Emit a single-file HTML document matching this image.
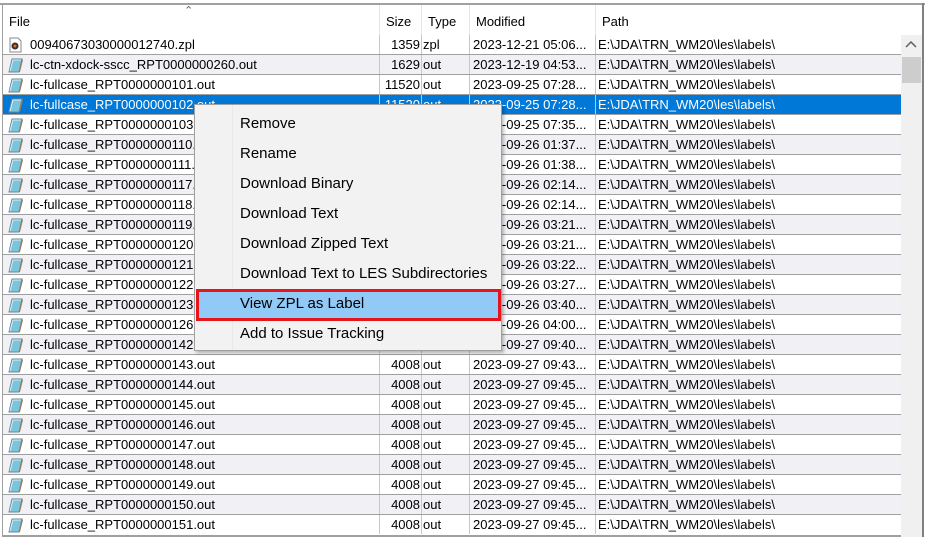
<!DOCTYPE html>
<html style="width:925px;height:537px;overflow:hidden"><head><meta charset="utf-8"><style>
*{margin:0;padding:0;box-sizing:border-box}
body{width:925px;height:537px;background:#fff;overflow:hidden;position:relative;font-family:"Liberation Sans",sans-serif;font-size:13px;color:#000}
.top{position:absolute;left:0;top:3px;width:925px;height:2px;background:#a0a0a0}
.lb{position:absolute;left:2px;top:3px;width:1px;height:534px;background:#a0a0a0}
.rb{position:absolute;left:922px;top:3px;width:2px;height:534px;background:#808080}
.hdr{position:absolute;top:5px;height:30px;left:3px;width:898px;background:#fff}
.hc{position:absolute;top:5px;height:30px;line-height:30px;padding-left:6px;border-right:1px solid #e5e5e5;padding-top:2px}
.row{position:absolute;left:3px;width:898px;height:20px;border-bottom:1px solid #a0a0a0}
.row.alt{background:#f0f0f5}
.row.sel{background:#0078d7;color:#fff}
.c{position:absolute;top:0;height:19px;line-height:19px;white-space:nowrap;overflow:hidden;border-right:1px solid #c8c8c8}
.f{left:0;width:377px;padding-left:27px}
.s{left:377px;width:42px;text-align:right;padding-right:1px}
.t{left:419px;width:48px;padding-left:1px}
.m{left:467px;width:126px;padding-left:3px}
.p{left:593px;width:305px;padding-left:2px;border-right:none}
.ic{position:absolute;left:3px;top:2px}
.sb{position:absolute;left:901px;top:35px;width:21px;height:502px;background:#f0f0f0}
.thumb{position:absolute;left:902px;top:57px;width:19px;height:26px;background:#cdcdcd}
.menu{position:absolute;left:194px;top:104px;width:308px;height:247px;background:#f2f2f2;border:1px solid #a0a0a0;box-shadow:2px 2px 3px rgba(0,0,0,.25);font-size:15px}
.gut{position:absolute;left:0;top:0;width:38px;height:100%;border-right:1px solid #e8e8e8}
.mi{position:absolute;left:45px;height:30px;line-height:30px}
.hl{position:absolute;left:1px;top:184px;width:305px;height:32px;background:#91c9f7;border:3px solid #e8141c}
</style></head><body>
<div class="top"></div>
<div class="hdr"></div>
<div class="hc" style="left:3px;width:377px">File</div>
<div style="position:absolute;left:184px;top:4px;font-size:11px;color:#666">&#8963;</div>
<div class="hc" style="left:380px;width:42px">Size</div>
<div class="hc" style="left:422px;width:48px">Type</div>
<div class="hc" style="left:470px;width:126px">Modified</div>
<div class="hc" style="left:596px;width:305px;border-right:none">Path</div>
<svg width="0" height="0" style="position:absolute"><defs>
<symbol id="doc" viewBox="0 0 18 16"><path d="M3 15 L6 2 L16 2 L13 15 Z" fill="#7cc4dc" stroke="#6a8a96"/><path d="M4 14 L7 3 L15 3" fill="none" stroke="#d8f0f8"/><path d="M13 15 L16 2 L17 3 L14 15Z" fill="#a07a50"/></symbol>
<symbol id="zpl" viewBox="0 0 18 16"><path d="M4 1 L12 1 L15 4 L15 15 L4 15 Z" fill="#fff" stroke="#888"/><circle cx="9" cy="9" r="3.5" fill="#333"/><circle cx="9" cy="9" r="1.5" fill="#e07020"/></symbol>
</defs></svg>
<div class="row" style="top:35px"><svg class="ic" width="18" height="16"><use href="#zpl"/></svg><div class="c f">00940673030000012740.zpl</div><div class="c s">1359</div><div class="c t">zpl</div><div class="c m">2023-12-21 05:06...</div><div class="c p">E:\JDA\TRN_WM20\les\labels\</div></div>
<div class="row alt" style="top:55px"><svg class="ic" width="18" height="16"><use href="#doc"/></svg><div class="c f">lc-ctn-xdock-sscc_RPT0000000260.out</div><div class="c s">1629</div><div class="c t">out</div><div class="c m">2023-12-19 04:53...</div><div class="c p">E:\JDA\TRN_WM20\les\labels\</div></div>
<div class="row" style="top:75px"><svg class="ic" width="18" height="16"><use href="#doc"/></svg><div class="c f">lc-fullcase_RPT0000000101.out</div><div class="c s">11520</div><div class="c t">out</div><div class="c m">2023-09-25 07:28...</div><div class="c p">E:\JDA\TRN_WM20\les\labels\</div></div>
<div class="row sel" style="top:95px"><svg class="ic" width="18" height="16"><use href="#doc"/></svg><div class="c f">lc-fullcase_RPT0000000102.out</div><div class="c s">11520</div><div class="c t">out</div><div class="c m">2023-09-25 07:28...</div><div class="c p">E:\JDA\TRN_WM20\les\labels\</div></div>
<div class="row" style="top:115px"><svg class="ic" width="18" height="16"><use href="#doc"/></svg><div class="c f">lc-fullcase_RPT0000000103.out</div><div class="c s">4008</div><div class="c t">out</div><div class="c m">2023-09-25 07:35...</div><div class="c p">E:\JDA\TRN_WM20\les\labels\</div></div>
<div class="row alt" style="top:135px"><svg class="ic" width="18" height="16"><use href="#doc"/></svg><div class="c f">lc-fullcase_RPT0000000110.out</div><div class="c s">4008</div><div class="c t">out</div><div class="c m">2023-09-26 01:37...</div><div class="c p">E:\JDA\TRN_WM20\les\labels\</div></div>
<div class="row" style="top:155px"><svg class="ic" width="18" height="16"><use href="#doc"/></svg><div class="c f">lc-fullcase_RPT0000000111.out</div><div class="c s">4008</div><div class="c t">out</div><div class="c m">2023-09-26 01:38...</div><div class="c p">E:\JDA\TRN_WM20\les\labels\</div></div>
<div class="row alt" style="top:175px"><svg class="ic" width="18" height="16"><use href="#doc"/></svg><div class="c f">lc-fullcase_RPT0000000117.out</div><div class="c s">4008</div><div class="c t">out</div><div class="c m">2023-09-26 02:14...</div><div class="c p">E:\JDA\TRN_WM20\les\labels\</div></div>
<div class="row" style="top:195px"><svg class="ic" width="18" height="16"><use href="#doc"/></svg><div class="c f">lc-fullcase_RPT0000000118.out</div><div class="c s">4008</div><div class="c t">out</div><div class="c m">2023-09-26 02:14...</div><div class="c p">E:\JDA\TRN_WM20\les\labels\</div></div>
<div class="row alt" style="top:215px"><svg class="ic" width="18" height="16"><use href="#doc"/></svg><div class="c f">lc-fullcase_RPT0000000119.out</div><div class="c s">4008</div><div class="c t">out</div><div class="c m">2023-09-26 03:21...</div><div class="c p">E:\JDA\TRN_WM20\les\labels\</div></div>
<div class="row" style="top:235px"><svg class="ic" width="18" height="16"><use href="#doc"/></svg><div class="c f">lc-fullcase_RPT0000000120.out</div><div class="c s">4008</div><div class="c t">out</div><div class="c m">2023-09-26 03:21...</div><div class="c p">E:\JDA\TRN_WM20\les\labels\</div></div>
<div class="row alt" style="top:255px"><svg class="ic" width="18" height="16"><use href="#doc"/></svg><div class="c f">lc-fullcase_RPT0000000121.out</div><div class="c s">4008</div><div class="c t">out</div><div class="c m">2023-09-26 03:22...</div><div class="c p">E:\JDA\TRN_WM20\les\labels\</div></div>
<div class="row" style="top:275px"><svg class="ic" width="18" height="16"><use href="#doc"/></svg><div class="c f">lc-fullcase_RPT0000000122.out</div><div class="c s">4008</div><div class="c t">out</div><div class="c m">2023-09-26 03:27...</div><div class="c p">E:\JDA\TRN_WM20\les\labels\</div></div>
<div class="row alt" style="top:295px"><svg class="ic" width="18" height="16"><use href="#doc"/></svg><div class="c f">lc-fullcase_RPT0000000123.out</div><div class="c s">4008</div><div class="c t">out</div><div class="c m">2023-09-26 03:40...</div><div class="c p">E:\JDA\TRN_WM20\les\labels\</div></div>
<div class="row" style="top:315px"><svg class="ic" width="18" height="16"><use href="#doc"/></svg><div class="c f">lc-fullcase_RPT0000000126.out</div><div class="c s">4008</div><div class="c t">out</div><div class="c m">2023-09-26 04:00...</div><div class="c p">E:\JDA\TRN_WM20\les\labels\</div></div>
<div class="row alt" style="top:335px"><svg class="ic" width="18" height="16"><use href="#doc"/></svg><div class="c f">lc-fullcase_RPT0000000142.out</div><div class="c s">4008</div><div class="c t">out</div><div class="c m">2023-09-27 09:40...</div><div class="c p">E:\JDA\TRN_WM20\les\labels\</div></div>
<div class="row" style="top:355px"><svg class="ic" width="18" height="16"><use href="#doc"/></svg><div class="c f">lc-fullcase_RPT0000000143.out</div><div class="c s">4008</div><div class="c t">out</div><div class="c m">2023-09-27 09:43...</div><div class="c p">E:\JDA\TRN_WM20\les\labels\</div></div>
<div class="row alt" style="top:375px"><svg class="ic" width="18" height="16"><use href="#doc"/></svg><div class="c f">lc-fullcase_RPT0000000144.out</div><div class="c s">4008</div><div class="c t">out</div><div class="c m">2023-09-27 09:45...</div><div class="c p">E:\JDA\TRN_WM20\les\labels\</div></div>
<div class="row" style="top:395px"><svg class="ic" width="18" height="16"><use href="#doc"/></svg><div class="c f">lc-fullcase_RPT0000000145.out</div><div class="c s">4008</div><div class="c t">out</div><div class="c m">2023-09-27 09:45...</div><div class="c p">E:\JDA\TRN_WM20\les\labels\</div></div>
<div class="row alt" style="top:415px"><svg class="ic" width="18" height="16"><use href="#doc"/></svg><div class="c f">lc-fullcase_RPT0000000146.out</div><div class="c s">4008</div><div class="c t">out</div><div class="c m">2023-09-27 09:45...</div><div class="c p">E:\JDA\TRN_WM20\les\labels\</div></div>
<div class="row" style="top:435px"><svg class="ic" width="18" height="16"><use href="#doc"/></svg><div class="c f">lc-fullcase_RPT0000000147.out</div><div class="c s">4008</div><div class="c t">out</div><div class="c m">2023-09-27 09:45...</div><div class="c p">E:\JDA\TRN_WM20\les\labels\</div></div>
<div class="row alt" style="top:455px"><svg class="ic" width="18" height="16"><use href="#doc"/></svg><div class="c f">lc-fullcase_RPT0000000148.out</div><div class="c s">4008</div><div class="c t">out</div><div class="c m">2023-09-27 09:45...</div><div class="c p">E:\JDA\TRN_WM20\les\labels\</div></div>
<div class="row" style="top:475px"><svg class="ic" width="18" height="16"><use href="#doc"/></svg><div class="c f">lc-fullcase_RPT0000000149.out</div><div class="c s">4008</div><div class="c t">out</div><div class="c m">2023-09-27 09:45...</div><div class="c p">E:\JDA\TRN_WM20\les\labels\</div></div>
<div class="row alt" style="top:495px"><svg class="ic" width="18" height="16"><use href="#doc"/></svg><div class="c f">lc-fullcase_RPT0000000150.out</div><div class="c s">4008</div><div class="c t">out</div><div class="c m">2023-09-27 09:45...</div><div class="c p">E:\JDA\TRN_WM20\les\labels\</div></div>
<div class="row" style="top:515px;height:22px;border-bottom:none"><svg class="ic" width="18" height="16"><use href="#doc"/></svg><div class="c f">lc-fullcase_RPT0000000151.out</div><div class="c s">4008</div><div class="c t">out</div><div class="c m">2023-09-27 09:45...</div><div class="c p">E:\JDA\TRN_WM20\les\labels\</div><div style="position:absolute;left:0;top:20px;width:898px;height:2px;background:#a0a0a0"></div></div>
<div class="lb"></div>
<div class="sb"></div>
<svg style="position:absolute;left:905px;top:41px" width="12" height="8"><path d="M1 6 L6 1 L11 6" fill="none" stroke="#606060" stroke-width="1.5"/></svg>
<div class="thumb"></div>
<div class="rb"></div>
<div class="menu">
<div class="gut"></div>
<div class="mi" style="top:4px">Remove</div>
<div class="mi" style="top:34px">Rename</div>
<div class="mi" style="top:64px">Download Binary</div>
<div class="mi" style="top:94px">Download Text</div>
<div class="mi" style="top:124px">Download Zipped Text</div>
<div class="mi" style="top:154px">Download Text to LES Subdirectories</div>
<div class="hl"></div>
<div class="mi" style="top:184px">View ZPL as Label</div>
<div class="mi" style="top:214px">Add to Issue Tracking</div>
</div>
</body></html>
